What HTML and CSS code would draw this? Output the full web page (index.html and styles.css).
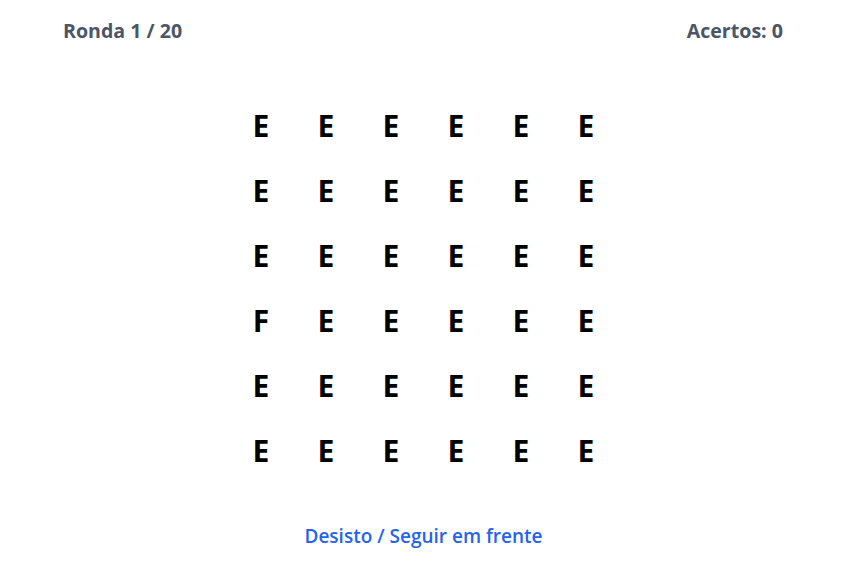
FILE: index.html
```html
<!DOCTYPE html>
<html lang="pt">
<head>
<meta charset="utf-8">
<title>Ronda</title>
<link rel="stylesheet" href="styles.css">
</head>
<body>
<div class="page">
  <header class="top">
    <span class="stat">Ronda 1 / 20</span>
    <span class="stat">Acertos: 0</span>
  </header>
  <main class="grid">
    <span class="cell">E</span><span class="cell">E</span><span class="cell">E</span><span class="cell">E</span><span class="cell">E</span><span class="cell">E</span>
    <span class="cell">E</span><span class="cell">E</span><span class="cell">E</span><span class="cell">E</span><span class="cell">E</span><span class="cell">E</span>
    <span class="cell">E</span><span class="cell">E</span><span class="cell">E</span><span class="cell">E</span><span class="cell">E</span><span class="cell">E</span>
    <span class="cell">F</span><span class="cell">E</span><span class="cell">E</span><span class="cell">E</span><span class="cell">E</span><span class="cell">E</span>
    <span class="cell">E</span><span class="cell">E</span><span class="cell">E</span><span class="cell">E</span><span class="cell">E</span><span class="cell">E</span>
    <span class="cell">E</span><span class="cell">E</span><span class="cell">E</span><span class="cell">E</span><span class="cell">E</span><span class="cell">E</span>
  </main>
  <footer class="actions">
    <a class="skip" href="#">Desisto / Seguir em frente</a>
  </footer>
</div>
</body>
</html>
```
FILE: styles.css
```css
html, body {
  margin: 0;
  padding: 0;
  background: #ffffff;
}
body {
  font-family: "Open Sans", "Noto Sans", "Liberation Sans", sans-serif;
}
.page {
  display: flex;
  flex-direction: column;
}
.top {
  display: flex;
  justify-content: space-between;
  padding: 17px 64px 0 63px;
}
.stat {
  font-size: 19.6px;
  line-height: 28px;
  font-weight: 700;
  color: #4a5568;
}
.grid {
  margin: 48px auto 0;
  display: grid;
  grid-template-columns: repeat(6, 65px);
  grid-auto-rows: 65px;
}
.cell {
  display: flex;
  align-items: center;
  justify-content: center;
  font-size: 30px;
  font-weight: 700;
  color: #000000;
}
.actions {
  display: flex;
  justify-content: center;
  margin-top: 39px;
}
.skip {
  font-size: 19px;
  line-height: 28px;
  font-weight: 600;
  color: #2563eb;
  text-decoration: none;
}
```
